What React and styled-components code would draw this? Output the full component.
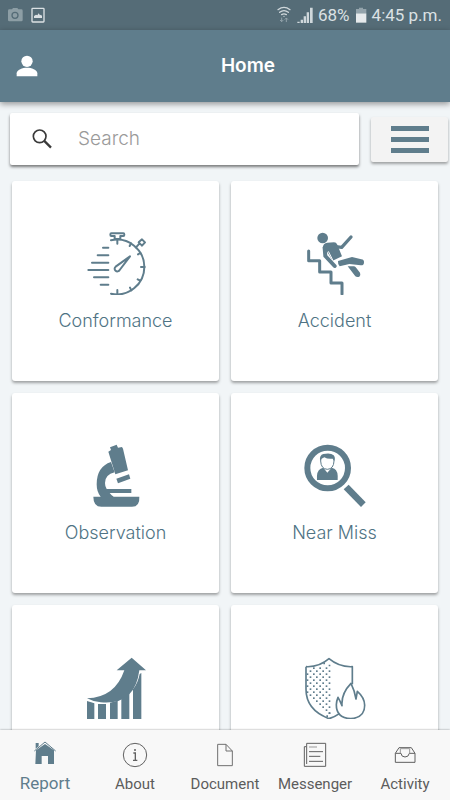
import React, { useState } from 'react'

// Styled-components:
import styled, { createGlobalStyle } from "styled-components"

const primary = "#5f7d8c"

// Status bar icons:
const CameraIcon = () => (
    <svg width="16" height="16" viewBox="21 20 48 48" aria-hidden="true">
        <path d="M28 27h8l3-4h13l3 4h9q4 0 4 4v28q0 4-4 4H28q-4 0-4-4V31q0-4 4-4z" fill="#8d9ea5" />
        <circle cx="45" cy="45" r="9" fill="none" stroke="#556c77" strokeWidth="4" />
    </svg>
)

const PictureIcon = () => (
    <svg width="16" height="16" viewBox="89 21 48 48" aria-hidden="true">
        <rect x="95" y="25" width="36" height="41" rx="2" fill="none" stroke="#dbe1e4" strokeWidth="4" />
        <path d="M101 54v-6l6-4 4 2 4-6 4 6 3-2 3 4v6z" fill="#dbe1e4" />
    </svg>
)

const WifiIcon = () => (
    <svg width="16" height="18" viewBox="50 18 48 54" fill="none" stroke="#cfd7db" strokeWidth="4" strokeLinecap="round" aria-hidden="true">
        <path d="M56 29q18-14 36 0M61 37q13-10 26 0M67 44q7-5 14 0" />
        <circle cx="74" cy="49" r="2" fill="#cfd7db" stroke="none" />
        <path d="M67 54v10M63 61l4 4 4-4M81 65V55M77 58l4-4 4 4" stroke="#93a3ab" strokeWidth="3" />
    </svg>
)

const SignalIcon = () => (
    <svg width="16" height="16" viewBox="109 22 48 48" fill="#cfd7db" aria-hidden="true">
        <path d="M110 66h7v4h-7zM120 60h7v10h-7zM129 50h7v20h-7zM138 38h7v32h-7zM148 24h8v46h-8z" />
    </svg>
)

const BatteryIcon = () => (
    <svg width="12" height="16" viewBox="285 21 36 48" aria-hidden="true">
        <path d="M288 27h9v-4h12v4h10v13h-31z" fill="#93a3ab" />
        <path d="M288 40h31v28h-31z" fill="#e6eaec" />
    </svg>
)

// Header and search icons:
const PersonIcon = () => (
    <svg width="22" height="22" viewBox="48 162 66 66" fill="#fff" aria-hidden="true">
        <circle cx="81" cy="181" r="17" />
        <path d="M50 226v-9c0-11 18-17 31-17s31 6 31 17v9z" />
    </svg>
)

const SearchIcon = () => (
    <svg width="20" height="20" viewBox="97 86 60 60" fill="none" stroke="#3a3a3a" strokeWidth="5" aria-hidden="true">
        <circle cx="120" cy="108" r="19" />
        <path d="M133 121l21 21" strokeWidth="7" />
    </svg>
)

// Tile icons:
const StopwatchIcon = () => (
    <TileSvg viewBox="26 33 192 192" fill="none" stroke={primary} strokeWidth="6" strokeLinecap="round" strokeLinejoin="round" aria-hidden="true">
        <path d="M107 61A82 82 0 1 1 107 221" />
        <path d="M108 40h36q3 0 3 4t-3 4h-9v9h-17v-9h-10q-3 0-3-4t3-4z" />
        <path d="M200 58l9 9-9 10-10-10zM190 73l-8 9" />
        <path d="M126 60v11M126 210v11M167 70l-4 8M195 99l-7 4M208 141h-11M195 182l-8-4M168 211l-4-8" />
        <path d="M164 109l-43 31a8 8 0 1 0 12 10z" />
        <path d="M83 83h16M67 106h32M50 128h49M39 150h60M56 172h43M76 194h23" />
    </TileSvg>
)

const FallIcon = () => (
    <TileSvg viewBox="38 33 192 192" fill={primary} aria-hidden="true">
        <circle cx="97" cy="54" r="16" />
        <path d="M97 84q1-15 14-16l20-1q7 0 10 7l14 35-28 13-16-26z" />
        <path d="M114 94l15 30" fill="none" stroke="#fff" strokeWidth="3" />
        <g fill="none" stroke={primary} strokeLinecap="round" strokeLinejoin="round">
            <path d="M136 80l18 2 28-31" strokeWidth="10" />
            <path d="M103 84l2 24 28 30" strokeWidth="12" />
            <path d="M55 93v29h33v34h34v33h33v33" strokeWidth="9" />
        </g>
        <path d="M143 123l42-12 28 7a9 9 0 0 1-2 18l-34-4-29 7q-6-7-5-16z" />
        <path d="M172 139h19q4 1 7 5l11 14q3 8-2 12-7 3-12-1z" />
    </TileSvg>
)

const MicroscopeIcon = () => (
    <TileSvg viewBox="26 24 192 192" fill={primary} aria-hidden="true">
        <path d="M104 37l20-8 4 9 12-2 3 5 15 65-38 12-21-68 8-5z" />
        <path d="M123 131l38-13 4 13-37 14z" />
        <path d="M54 185h22q-12-14-12-37 0-53 43-67l11 31q-29 7-29 32 0 11 5 18h74v12h-65q5 7 12 11h77q2 30-22 30H78q-24 0-24-30z" />
    </TileSvg>
)

const InspectIcon = () => (
    <TileSvg viewBox="38 24 192 192" fill={primary} aria-hidden="true">
        <circle cx="112" cy="99" r="61" fill="none" stroke={primary} strokeWidth="18" />
        <path d="M160 163l15-14 51 53-14 14z" />
        <path d="M80 135q-2-28 11-34l8-3 12 15 13-15 8 3q12 6 10 34z" />
        <path d="M91 78q-1-18 20-18t20 18q-1 24-20 25-19-1-20-25z" fill="#fff" stroke={primary} strokeWidth="3" />
        <path d="M89 77q-2-17 10-20 22-5 31 4 6 7 2 17l-5-7q-15 2-25-4-10 4-13 10z" />
    </TileSvg>
)

const GrowthIcon = () => (
    <TileSvg viewBox="26 30 192 192" fill={primary} aria-hidden="true">
        <path d="M35 160q84-2 112-84h-23l45-38 43 38h-20q-13 106-116 96-23-2-41-12z" />
        <path d="M35 168l22 7v50H35zM68 177h24v48H68zM104 173l23-6v58h-23zM138 162l24-17v80h-24zM173 133q15-19 20-46l5-3v141h-25z" />
    </TileSvg>
)

const dots = [
    ...[0, 1, 2, 3, 4, 5, 6, 7].flatMap((row) => [0, 1, 2, 3].map((col) => [60 + col * 19, 78 + row * 18])),
    ...[0, 1, 2, 3, 4, 5, 6, 7].flatMap((row) => [0, 1, 2, 3].map((col) => [51 + col * 19, 69 + row * 18])),
].filter(([x, y]) => y < 150 + (x - 50) && y > 68 - (x - 60) / 8)

const ShieldIcon = () => (
    <TileSvg viewBox="38 30 192 192" fill="none" stroke={primary} strokeWidth="5" strokeLinejoin="round" aria-hidden="true">
        <path d="M47 65q39 2 69-24 31 26 70 24v53M47 65v68q0 62 69 88 17-5 31-15" />
        <g fill={primary} stroke="none">
            {dots.map(([x, y]) => (
                <rect key={`${x}-${y}`} x={x - 2} y={y - 2} width="5" height="5" />
            ))}
            <path d="M99 53h5v5h-5zM115 59h5v5h-5zM115 202h5v5h-5zM108 211h5v5h-5z" />
        </g>
        <path d="M155 182q-3-36 27-67 11 22 15 47l4-23q22 19 22 42 0 38-42 40-43-2-43-42 0-10 5-22 6 10 12 25z" />
    </TileSvg>
)

// Tab icons:
const HomeIcon = () => (
    <TabSvg viewBox="93 45 84 84" aria-hidden="true">
        <path d="M108 76l27-19 27 19v41h-18V93h-19v24h-19zM107 54h9v10l-9 7z" fill={primary} />
        <path d="M103 78l32-27 32 27" fill="none" stroke={primary} strokeWidth="3" />
    </TabSvg>
)

const AboutIcon = () => (
    <TabSvg viewBox="363 45 84 84" fill="none" stroke="#606060" strokeWidth="3" aria-hidden="true">
        <circle cx="405" cy="90" r="35" />
        <path d="M400 84h6v21M399 106h13" strokeWidth="4" />
        <circle cx="405" cy="75" r="3" fill="#606060" stroke="none" />
    </TabSvg>
)

const DocumentIcon = () => (
    <TabSvg viewBox="-42 45 84 84" fill="none" stroke="#707070" strokeWidth="3" aria-hidden="true">
        <path d="M-22 58H3l19 20v44h-44zM3 58v20h19" />
    </TabSvg>
)

const MessengerIcon = () => (
    <TabSvg viewBox="228 45 84 84" fill="none" stroke="#606060" strokeWidth="3" aria-hidden="true">
        <path d="M245 55h57v69h-64V65h7zM245 65v52M252 80h42M252 94h34M252 109h42" />
        <path d="M252 66h24" stroke="#999" />
    </TabSvg>
)

const ActivityIcon = () => (
    <TabSvg viewBox="498 45 84 84" fill="none" stroke="#606060" strokeWidth="3" aria-hidden="true">
        <path d="M511 85v27h59V85l-11-17h-37zM511 85h17q1 11 12 11t13-11h17" />
        <path d="M526 84V71h28v13" stroke="#999" />
    </TabSvg>
)

const tiles = [
    { id: "conformance", label: "Conformance", Icon: StopwatchIcon },
    { id: "accident", label: "Accident", Icon: FallIcon },
    { id: "observation", label: "Observation", Icon: MicroscopeIcon },
    { id: "near-miss", label: "Near Miss", Icon: InspectIcon },
    { id: "growth", Icon: GrowthIcon },
    { id: "fire", Icon: ShieldIcon },
]

const tabs = [
    { name: "Report", Icon: HomeIcon },
    { name: "About", Icon: AboutIcon },
    { name: "Document", Icon: DocumentIcon },
    { name: "Messenger", Icon: MessengerIcon },
    { name: "Activity", Icon: ActivityIcon },
]

function App() {
    const [tab, setTab] = useState("Report")

    return (
        <>
            <GlobalStyle />
            <Screen>
                <StatusBar>
                    <CameraIcon />
                    <PictureIcon />
                    <StatusRight>
                        <WifiIcon />
                        <SignalIcon />
                        <span>68%</span>
                        <BatteryIcon />
                        <span>4:45 p.m.</span>
                    </StatusRight>
                </StatusBar>

                <Header>
                    <HeaderButton type="button" aria-label="Profile">
                        <PersonIcon />
                    </HeaderButton>
                    <h1>Home</h1>
                </Header>

                <Main>
                    <Toolbar>
                        <SearchBox>
                            <SearchIcon />
                            <input type="search" placeholder="Search" aria-label="Search" />
                        </SearchBox>
                        <MenuButton type="button" aria-label="Menu">
                            <MenuLine />
                            <MenuLine />
                            <MenuLine />
                        </MenuButton>
                    </Toolbar>

                    <Tiles>
                        {tiles.map(({ id, label, Icon }) => (
                            <Tile key={id} type="button" aria-label={label || id}>
                                <Icon />
                                {label && <TileLabel>{label}</TileLabel>}
                            </Tile>
                        ))}
                    </Tiles>
                </Main>

                <TabBar>
                    {tabs.map(({ name, Icon }) => (
                        <Tab key={name} type="button" $active={tab === name} onClick={() => setTab(name)}>
                            <Icon />
                            <span>{name}</span>
                        </Tab>
                    ))}
                </TabBar>
            </Screen>
        </>
    )
}

export default App

const GlobalStyle = createGlobalStyle`
    * {
        box-sizing: border-box;
    }

    body {
        margin: 0;
        background: #f1f5f7;
        font-family: Inter, Roboto, sans-serif;
    }

    button, input {
        font-family: inherit;
        border: none;
        padding: 0;
    }

    svg {
        display: block;
        flex-shrink: 0;
    }
`

const Screen = styled.div`
    display: flex;
    flex-direction: column;
    height: 100vh;
`

const StatusBar = styled.div`
    display: flex;
    align-items: center;
    gap: 7px;
    height: 30px;
    padding: 0 8px 0 7px;
    flex-shrink: 0;
    background: #556c77;
`

const StatusRight = styled.div`
    display: flex;
    align-items: center;
    gap: 5px;
    margin-left: auto;
    color: #dbe1e4;
    font-family: Roboto, sans-serif;
    font-size: 17px;
    line-height: 24px;
`

const Header = styled.header`
    display: grid;
    grid-template-columns: 30px 1fr;
    align-items: center;
    height: 72px;
    padding: 0 0 0 16px;
    flex-shrink: 0;
    z-index: 1;
    background: ${primary};
    box-shadow: 0 2px 6px rgba(0, 0, 0, 0.4);

    > h1 {
        margin: 0;
        text-align: center;
        color: #fff;
        font-size: 19px;
        font-weight: 600;
        line-height: 24px;
    }
`

const HeaderButton = styled.button`
    background: none;
    cursor: pointer;
`

const Main = styled.main`
    flex: 1;
    min-height: 0;
    overflow: hidden;
`

const Toolbar = styled.div`
    display: flex;
    align-items: center;
    gap: 12px;
    padding: 11px 2px 16px 10px;
`

const SearchBox = styled.label`
    display: flex;
    align-items: center;
    gap: 26px;
    flex: 1;
    min-width: 0;
    height: 52px;
    padding: 0 22px;
    border-radius: 2px;
    background: #fff;
    box-shadow: 0 2px 3px rgba(0, 0, 0, 0.5);

    > input {
        flex: 1;
        min-width: 0;
        outline: none;
        background: none;
        color: #3a3a3a;
        font-size: 19px;
        font-weight: 300;
        line-height: 24px;
    }

    > input::placeholder {
        color: #9a9a9a;
        opacity: 1;
    }
`

const MenuButton = styled.button`
    display: flex;
    flex-direction: column;
    align-items: center;
    justify-content: center;
    gap: 6px;
    width: 77px;
    height: 45px;
    border-radius: 2px;
    background: #f3f3f3;
    box-shadow: 0 2px 3px rgba(0, 0, 0, 0.35);
    cursor: pointer;
`

const MenuLine = styled.span`
    width: 38px;
    height: 5px;
    background: ${primary};
`

const Tiles = styled.div`
    display: grid;
    grid-template-columns: 1fr 1fr;
    gap: 12px;
    padding: 0 12px 12px;
`

const Tile = styled.button`
    display: flex;
    flex-direction: column;
    align-items: center;
    gap: 14px;
    height: 200px;
    padding-top: 50px;
    border-radius: 3px;
    background: #fff;
    box-shadow: 0 2px 3px rgba(0, 0, 0, 0.35);
    cursor: pointer;
`

const TileSvg = styled.svg`
    width: 64px;
    height: 64px;
`

const TileLabel = styled.span`
    color: #4f7384;
    font-size: 18px;
    font-weight: 300;
    line-height: 24px;
`

const TabBar = styled.nav`
    display: grid;
    grid-template-columns: repeat(5, 1fr);
    height: 70px;
    flex-shrink: 0;
    z-index: 1;
    background: #f8f8f8;
    box-shadow: 0 0 2px rgba(0, 0, 0, 0.4);
`

const Tab = styled.button`
    display: flex;
    flex-direction: column;
    align-items: center;
    gap: ${(props) => (props.$active ? "3px" : "4px")};
    padding-top: 10px;
    background: none;
    color: ${(props) => (props.$active ? primary : "#5c5c5c")};
    font-family: Roboto, sans-serif;
    font-size: ${(props) => (props.$active ? "17px" : "15px")};
    line-height: 24px;
    cursor: pointer;
`

const TabSvg = styled.svg`
    width: 28px;
    height: 28px;
`
